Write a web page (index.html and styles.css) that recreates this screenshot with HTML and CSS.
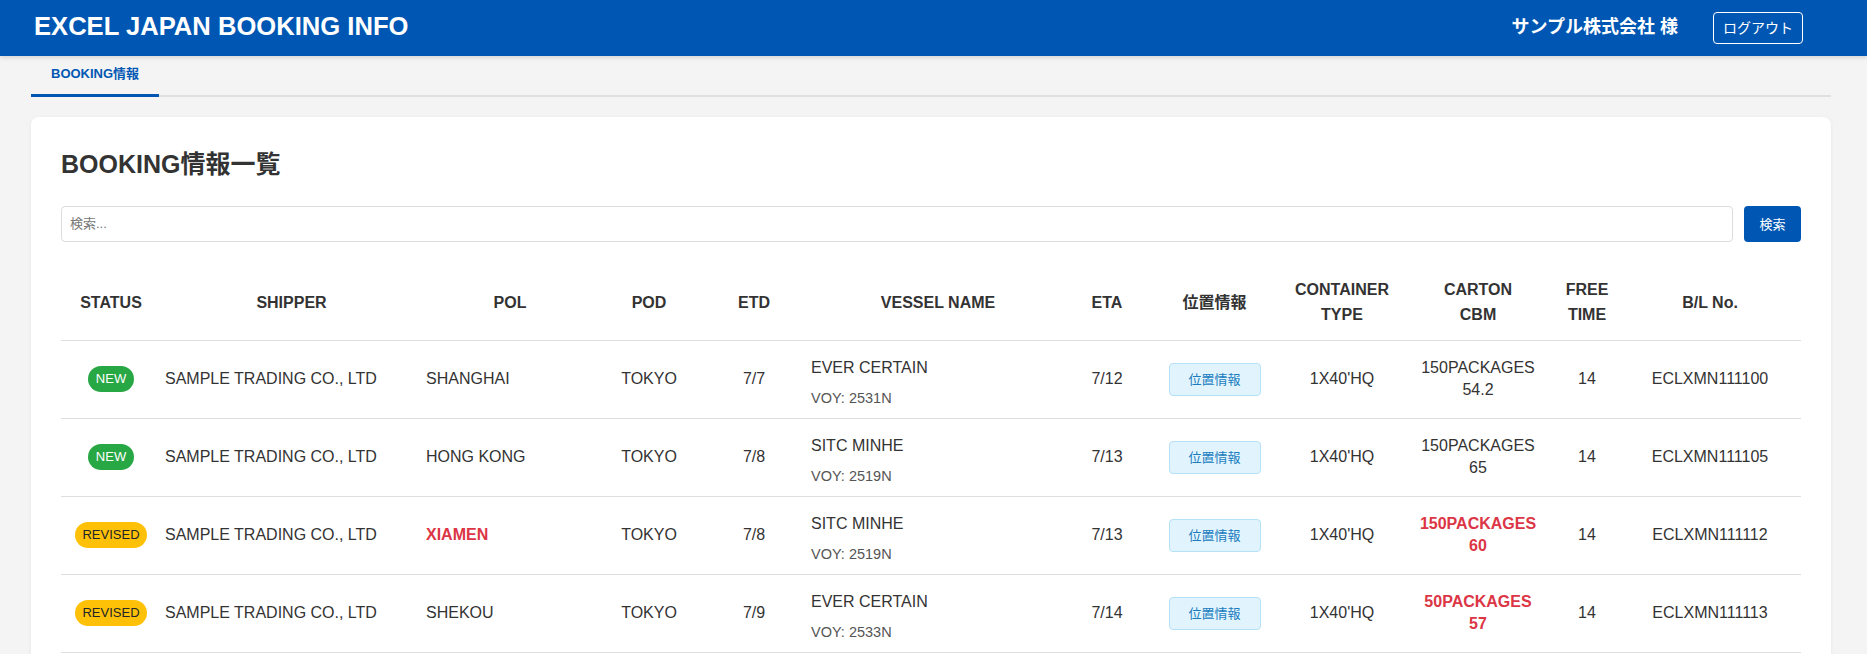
FILE: index.html
```html
<!DOCTYPE html>
<html lang="ja">
<head>
<meta charset="utf-8">
<title>EXCEL JAPAN BOOKING INFO</title>
<link rel="stylesheet" href="styles.css">
</head>
<body>
<header class="topbar">
  <h1 class="brand">EXCEL JAPAN BOOKING INFO</h1>
  <div class="user">
    <span class="user-name">サンプル株式会社 様</span>
    <button class="logout" type="button">ログアウト</button>
  </div>
</header>

<main class="main">
  <nav class="tabs">
    <a class="tab active" href="#">BOOKING情報</a>
  </nav>

  <section class="card">
    <h2 class="card-title">BOOKING情報一覧</h2>
    <div class="search">
      <input class="search-input" type="text" placeholder="検索...">
      <button class="search-btn" type="button">検索</button>
    </div>

    <table class="bookings">
      <colgroup>
        <col class="c-status"><col class="c-shipper"><col class="c-pol"><col class="c-pod"><col class="c-etd"><col class="c-vessel"><col class="c-eta"><col class="c-pos"><col class="c-cont"><col class="c-carton"><col class="c-free"><col class="c-bl">
      </colgroup>
      <thead>
        <tr>
          <th>STATUS</th><th>SHIPPER</th><th>POL</th><th>POD</th><th>ETD</th><th>VESSEL NAME</th><th>ETA</th><th>位置情報</th><th>CONTAINER<br>TYPE</th><th>CARTON<br>CBM</th><th>FREE<br>TIME</th><th>B/L No.</th>
        </tr>
      </thead>
      <tbody>
        <tr>
          <td><span class="badge new">NEW</span></td>
          <td class="left">SAMPLE TRADING CO., LTD</td>
          <td class="left">SHANGHAI</td>
          <td>TOKYO</td>
          <td>7/7</td>
          <td class="left vessel-cell"><div class="vessel">EVER CERTAIN</div><div class="voy">VOY: 2531N</div></td>
          <td>7/12</td>
          <td><button class="pos-btn" type="button">位置情報</button></td>
          <td>1X40'HQ</td>
          <td>150PACKAGES<br>54.2</td>
          <td>14</td>
          <td>ECLXMN111100</td>
        </tr>
        <tr>
          <td><span class="badge new">NEW</span></td>
          <td class="left">SAMPLE TRADING CO., LTD</td>
          <td class="left">HONG KONG</td>
          <td>TOKYO</td>
          <td>7/8</td>
          <td class="left vessel-cell"><div class="vessel">SITC MINHE</div><div class="voy">VOY: 2519N</div></td>
          <td>7/13</td>
          <td><button class="pos-btn" type="button">位置情報</button></td>
          <td>1X40'HQ</td>
          <td>150PACKAGES<br>65</td>
          <td>14</td>
          <td>ECLXMN111105</td>
        </tr>
        <tr>
          <td><span class="badge revised">REVISED</span></td>
          <td class="left">SAMPLE TRADING CO., LTD</td>
          <td class="left changed">XIAMEN</td>
          <td>TOKYO</td>
          <td>7/8</td>
          <td class="left vessel-cell"><div class="vessel">SITC MINHE</div><div class="voy">VOY: 2519N</div></td>
          <td>7/13</td>
          <td><button class="pos-btn" type="button">位置情報</button></td>
          <td>1X40'HQ</td>
          <td class="changed">150PACKAGES<br>60</td>
          <td>14</td>
          <td>ECLXMN111112</td>
        </tr>
        <tr>
          <td><span class="badge revised">REVISED</span></td>
          <td class="left">SAMPLE TRADING CO., LTD</td>
          <td class="left">SHEKOU</td>
          <td>TOKYO</td>
          <td>7/9</td>
          <td class="left vessel-cell"><div class="vessel">EVER CERTAIN</div><div class="voy">VOY: 2533N</div></td>
          <td>7/14</td>
          <td><button class="pos-btn" type="button">位置情報</button></td>
          <td>1X40'HQ</td>
          <td class="changed">50PACKAGES<br>57</td>
          <td>14</td>
          <td>ECLXMN111113</td>
        </tr>
      </tbody>
    </table>
  </section>
</main>
</body>
</html>
```

FILE: styles.css
```css
* {
  box-sizing: border-box;
}

html, body {
  margin: 0;
  padding: 0;
}

body {
  background: #f4f4f4;
  color: #333;
  font-family: "Liberation Sans", "Noto Sans CJK JP", sans-serif;
  font-size: 16px;
  line-height: 1.6;
}

/* ---------- top bar ---------- */
.topbar {
  height: 56px;
  background: #0057b3;
  color: #fff;
  display: flex;
  align-items: center;
  justify-content: space-between;
  padding: 0 64px 0 34px;
  box-shadow: 0 2px 4px rgba(0, 0, 0, 0.12);
  position: relative;
  z-index: 1;
}

.brand {
  margin: 0;
  padding-bottom: 5px;
  font-size: 25.6px;
  line-height: 30px;
  font-weight: 700;
  letter-spacing: 0;
}

.user {
  display: flex;
  align-items: center;
  gap: 35px;
}

.user-name {
  font-size: 18px;
  font-weight: 700;
  line-height: 24px;
  padding-bottom: 3px;
}

.logout {
  height: 32px;
  padding: 0 9px;
  background: transparent;
  color: #fff;
  border: 1px solid #fff;
  border-radius: 4px;
  font-family: "Liberation Sans", "Noto Sans CJK JP", sans-serif;
  font-size: 14px;
  line-height: 1;
}

/* ---------- main ---------- */
.main {
  padding: 0 36px 0 31px;
}

.tabs {
  display: flex;
  border-bottom: 2px solid #e0e0e0;
}

.tab {
  display: block;
  padding: 8px 20px 9px;
  margin-bottom: -2px;
  font-size: 13px;
  line-height: 20.8px;
  font-weight: 700;
  color: #0057b3;
  text-decoration: none;
  border-bottom: 3px solid #0057b3;
}

.card {
  margin-top: 20px;
  background: #fff;
  border-radius: 8px;
  padding: 32px 30px 30px;
  box-shadow: 0 1px 4px rgba(0, 0, 0, 0.06);
}

.card-title {
  margin: 0 0 27px;
  font-size: 25px;
  line-height: 30px;
  font-weight: 700;
  color: #333;
}

.search {
  display: flex;
  gap: 11px;
  margin-bottom: 23px;
}

.search-input {
  flex: 1;
  height: 36px;
  border: 1px solid #dcdcdc;
  border-radius: 4px;
  padding: 0 8px;
  font-family: "Liberation Sans", "Noto Sans CJK JP", sans-serif;
  font-size: 13px;
  color: #333;
}

.search-input::placeholder {
  color: #777;
}

.search-btn {
  width: 57px;
  height: 36px;
  background: #0057b3;
  color: #fff;
  border: none;
  border-radius: 4px;
  font-family: "Liberation Sans", "Noto Sans CJK JP", sans-serif;
  font-size: 13px;
  padding: 0;
}

/* ---------- table ---------- */
.bookings {
  width: 100%;
  table-layout: fixed;
  border-collapse: collapse;
}

.c-status { width: 100px; }
.c-shipper { width: 261px; }
.c-pol { width: 176px; }
.c-pod { width: 102px; }
.c-etd { width: 108px; }
.c-vessel { width: 260px; }
.c-eta { width: 78px; }
.c-pos { width: 137px; }
.c-cont { width: 118px; }
.c-carton { width: 154px; }
.c-free { width: 64px; }
.c-bl { width: 182px; }

.bookings th {
  padding: 12px 4px;
  font-size: 16px;
  line-height: 25.6px;
  font-weight: 700;
  color: #333;
  text-align: center;
  vertical-align: middle;
  border-bottom: 1px solid #dedede;
}

.bookings td {
  padding: 14px 4px;
  font-size: 16px;
  line-height: 22.4px;
  color: #333;
  text-align: center;
  vertical-align: middle;
  border-bottom: 1px solid #dedede;
}

.bookings td.left {
  text-align: left;
}

.bookings td.vessel-cell {
  padding: 16px 4px 10px 3px;
}

.bookings td.changed {
  color: #dc3545;
  font-weight: 700;
}

.vessel {
  line-height: 22.4px;
}

.voy {
  margin-top: 8.5px;
  font-size: 14.5px;
  line-height: 20px;
  color: #555;
}

.badge {
  display: inline-block;
  height: 26px;
  padding: 0 7.5px;
  border-radius: 13px;
  font-size: 13px;
  line-height: 26px;
  vertical-align: middle;
}

.badge.new {
  background: #28a745;
  color: #fff;
}

.badge.revised {
  background: #ffc107;
  color: #212529;
}

.pos-btn {
  width: 92px;
  height: 33px;
  padding: 0;
  background: #e1f4fd;
  border: 1px solid #b5e1f7;
  border-radius: 4px;
  color: #1a7cbf;
  font-family: "Liberation Sans", "Noto Sans CJK JP", sans-serif;
  font-size: 13px;
  line-height: 1;
  vertical-align: middle;
}
```
